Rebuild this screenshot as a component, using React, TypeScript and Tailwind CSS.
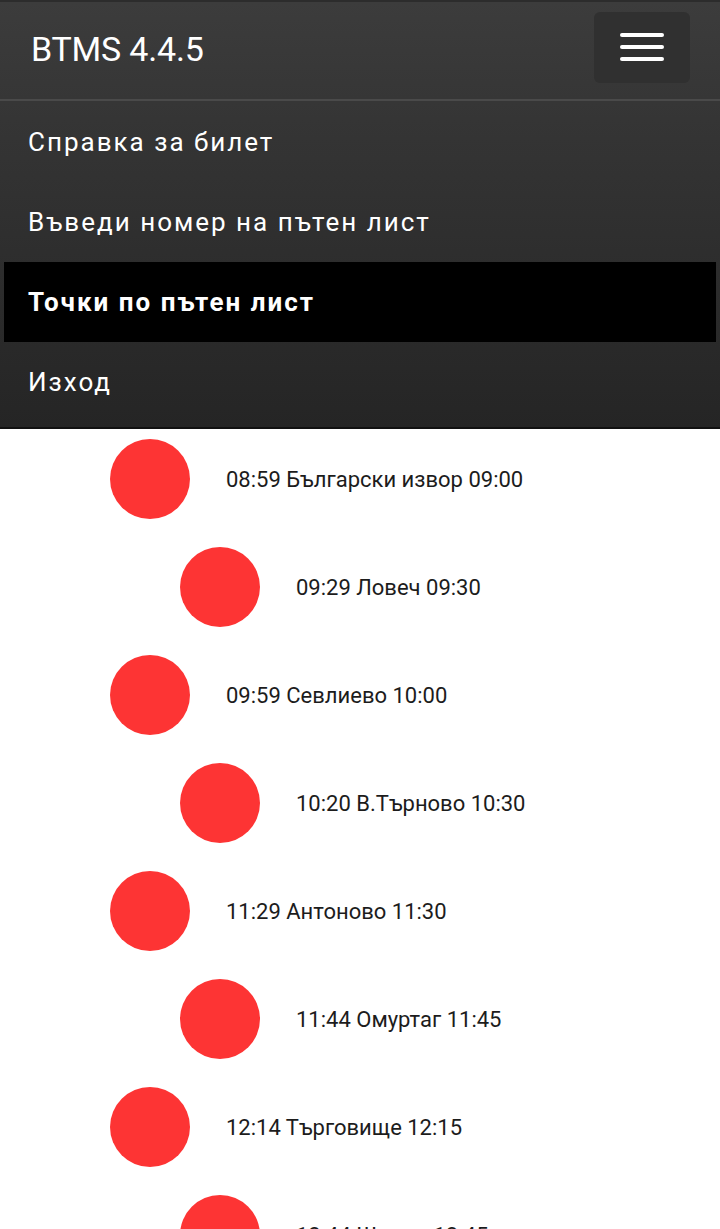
import React from "react";

const MENU = [
  { label: "Справка за билет", active: false },
  { label: "Въведи номер на пътен лист", active: false },
  { label: "Точки по пътен лист", active: true },
  { label: "Изход", active: false },
];

const STOPS = [
  "08:59 Български извор 09:00",
  "09:29 Ловеч 09:30",
  "09:59 Севлиево 10:00",
  "10:20 В.Търново 10:30",
  "11:29 Антоново 11:30",
  "11:44 Омуртаг 11:45",
  "12:14 Търговище 12:15",
  "12:44 Шумен 12:45",
];

export default function App() {
  return (
    <div
      className="h-[1229px] w-[720px] overflow-hidden bg-white"
      style={{ fontFamily: "Roboto, 'Noto Sans', sans-serif" }}
    >
      {/* top bar */}
      <header className="flex h-[99px] items-center justify-between border-t-2 border-[#2c2c2c] bg-gradient-to-b from-[#3c3c3c] to-[#363636] pl-[31px] pr-[30px]">
        <h1 className="mb-[3px] text-[34px] leading-none tracking-[-0.2px] text-white">BTMS 4.4.5</h1>
        <button className="mb-[7px] flex h-[71px] w-[96px] flex-col items-center justify-center gap-[8px] rounded-[6px] bg-[#303030]">
          <span className="block h-[4px] w-[44px] rounded-full bg-white" />
          <span className="block h-[4px] w-[44px] rounded-full bg-white" />
          <span className="block h-[4px] w-[44px] rounded-full bg-white" />
        </button>
      </header>

      {/* dropdown menu */}
      <nav className="border-t-2 border-[#4a4a4a] border-b-2 border-b-[#111] bg-gradient-to-b from-[#363636] to-[#252525] px-[4px] pt-[1px] pb-[5px]">
        {MENU.map((item) => (
          <div
            key={item.label}
            className={
              item.active
                ? "flex h-[80px] items-center bg-black pl-[24px] text-[26px] font-bold tracking-[2px] text-white"
                : "flex h-[80px] items-center pl-[24px] text-[26px] tracking-[2px] text-white"
            }
          >
            {item.label}
          </div>
        ))}
      </nav>

      {/* route points */}
      <ul className="flex flex-col gap-[28px] pt-[10px]">
        {STOPS.map((stop, i) => (
          <li
            key={stop}
            className={i % 2 === 0 ? "flex h-[80px] items-center gap-[36px] pl-[110px]" : "flex h-[80px] items-center gap-[36px] pl-[180px]"}
          >
            <span className="block h-[80px] w-[80px] shrink-0 rounded-full bg-[#fd3434]" />
            <span className="text-[22px] text-[#1c1c1c]">{stop}</span>
          </li>
        ))}
      </ul>
    </div>
  );
}
